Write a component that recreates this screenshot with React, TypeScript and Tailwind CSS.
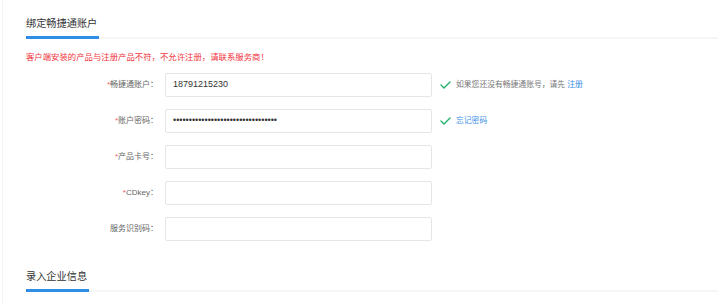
import React from 'react';

const FONT = { fontFamily: '"Liberation Sans", "Noto Sans CJK SC", sans-serif' };

const Check = () => (
  <svg width="11" height="8" viewBox="0 0 11 8" className="shrink-0">
    <polyline points="1,4 4,7 10,1" fill="none" stroke="#21b36c" strokeWidth="1.4" strokeLinecap="round" strokeLinejoin="round" />
  </svg>
);

interface RowProps {
  label: string;
  required?: boolean;
  value?: React.ReactNode;
  hint?: React.ReactNode;
}

const FormRow: React.FC<RowProps> = ({ label, required, value, hint }) => (
  <div className="flex items-center h-[24px]">
    <div className="w-[132px] text-right text-[8px] leading-[12px] text-[#666]">
      {required && <span className="text-[#f5626a]">*</span>}
      {label}：
    </div>
    <div className="ml-[7px] w-[267px] h-[24px] border border-[#e6e6e6] rounded-[2px] flex items-center pl-[7px] text-[9px] text-[#333]">
      {value}
    </div>
    {hint && <div className="ml-[8px] flex items-center gap-[5px] text-[7.8px] text-[#777]">{hint}</div>}
  </div>
);

const SectionTitle: React.FC<{ title: string }> = ({ title }) => (
  <div className="flex border-b-2 border-[#f6f6f6]">
    <div className="pt-[17px] pb-[5px] pr-[2px] border-b-[3px] border-[#2e8de6] text-[10.2px] leading-[14px] text-[#333] mb-[-2px]">
      {title}
    </div>
  </div>
);

export default function App() {
  const dots = '•'.repeat(33);
  return (
    <div className="w-[718px] h-[304px] bg-white overflow-hidden" style={FONT}>
      <div className="ml-[2px] h-full border-l border-[#f5f5f5] pl-[23px]">
        <SectionTitle title="绑定畅捷通账户" />

        <div className="mt-[12px] text-[8.4px] leading-[12px] text-[#f2333c]">
          客户端安装的产品与注册产品不符，不允许注册，请联系服务商！
        </div>

        <div className="mt-[10px] flex flex-col gap-[12px]">
          <FormRow
            label="畅捷通账户"
            required
            value="18791215230"
            hint={
              <>
                <Check />
                <span>
                  如果您还没有畅捷通账号，请先 <span className="text-[#3b8fe8]">注册</span>
                </span>
              </>
            }
          />
          <FormRow
            label="账户密码"
            required
            value={<span className="text-[9px] text-[#333]">{dots}</span>}
            hint={
              <>
                <Check />
                <span className="text-[#3b8fe8]">忘记密码</span>
              </>
            }
          />
          <FormRow label="产品卡号" required />
          <FormRow label="CDkey" required />
          <FormRow label="服务识别码" />
        </div>

        <div className="mt-[12px]">
          <SectionTitle title="录入企业信息" />
        </div>
      </div>
    </div>
  );
}
